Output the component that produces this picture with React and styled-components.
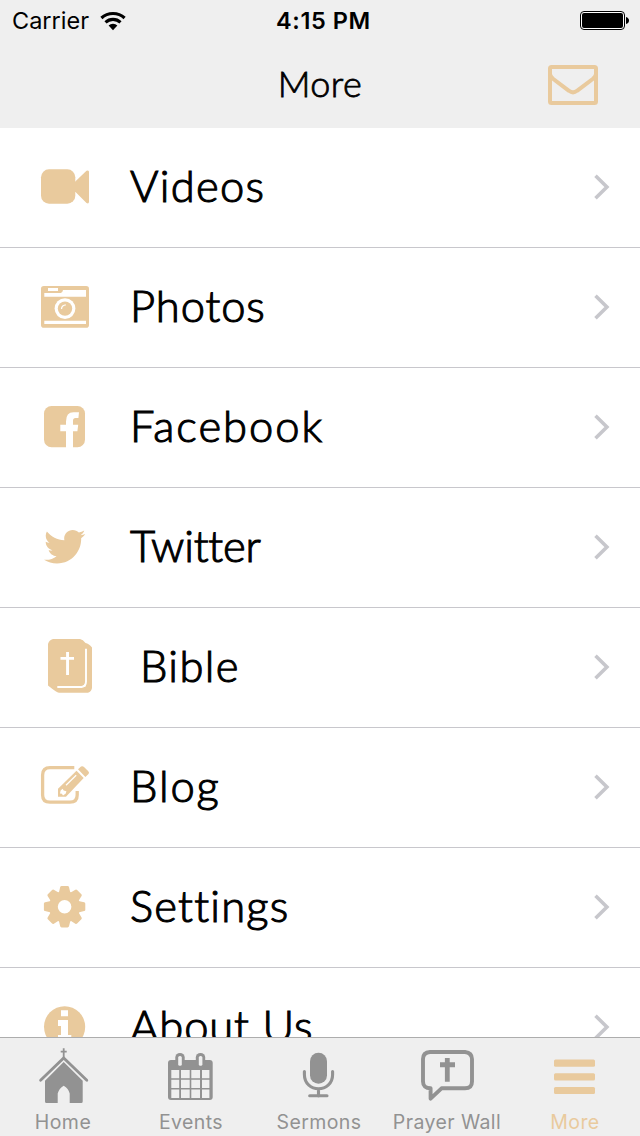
import React from 'react'
import styled, {createGlobalStyle} from 'styled-components'
import {FaTwitter} from 'react-icons/fa'

const tan = '#e9ca9d'
const gray = '#929292'
const bar = '#efefef'

const GlobalStyle = createGlobalStyle`
  * {
    box-sizing: border-box;
  }
  body {
    margin: 0;
    background: white;
    overflow: hidden;
  }
`

const Screen = styled.div`
  display: flex;
  flex-direction: column;
  width: 640px;
  height: 1136px;
  overflow: hidden;
  background: white;
  color: black;
  font-family: Inter, "Liberation Sans", sans-serif;
`

const StatusBar = styled.div`
  display: grid;
  grid-template-columns: 200px 1fr 200px;
  align-items: center;
  flex: none;
  height: 40px;
  padding: 0 11px 0 12px;
  background: ${bar};
`

const Carrier = styled.div`
  display: flex;
  align-items: center;
  gap: 11px;
  font-size: 23.5px;
  line-height: 40px;
`

const Clock = styled.div`
  padding: 1px 0 0 6px;
  text-align: center;
  font-size: 23.5px;
  font-weight: 600;
  line-height: 40px;
  letter-spacing: 0.6px;
`

const Battery = styled.svg`
  justify-self: end;
`

const Header = styled.header`
  display: grid;
  grid-template-columns: 200px 1fr 200px;
  align-items: center;
  flex: none;
  height: 88px;
  padding: 0 42px;
  background: ${bar};
`

const Title = styled.h1`
  grid-column: 2;
  margin: 0;
  padding-bottom: 2px;
  text-align: center;
  font-family: Lato, sans-serif;
  font-size: 36px;
  font-weight: 300;
  line-height: 86px;
  letter-spacing: 0.4px;
  -webkit-text-stroke: 0.8px black;
`

const Mail = styled.svg`
  justify-self: end;
  margin-top: 2px;
`

const List = styled.div`
  flex: 1;
  min-height: 0;
  overflow: hidden;
`

const Row = styled.div`
  display: flex;
  align-items: center;
  height: 120px;
  padding: 0 26px 0 32px;
  border-bottom: 1px solid #c8c7cc;
`

const RowIcon = styled.svg`
  flex: none;
  width: 64px;
  height: 65px;
  fill: ${tan};
  color: ${tan};
`

const Label = styled.span`
  flex: 1;
  margin-left: ${props => props.$left}px;
  padding-bottom: 4px;
  font-family: Lato, sans-serif;
  font-size: 43.5px;
  font-weight: 300;
  line-height: 115px;
  white-space: nowrap;
  letter-spacing: ${props => props.$spacing}px;
  -webkit-text-stroke: 1.1px black;
`

const TabBar = styled.nav`
  display: grid;
  grid-template-columns: repeat(5, 128px);
  flex: none;
  height: 99px;
  border-top: 1px solid #adadad;
  background: ${bar};
`

const Tab = styled.div`
  display: flex;
  flex-direction: column;
  align-items: center;
  padding-top: 6px;
  color: ${props => props.$active ? tan : gray};
`

const TabIcon = styled.svg`
  width: 64px;
  height: 60px;
  fill: currentColor;
`

const TabLabel = styled.span`
  margin-top: 6px;
  padding-right: 2px;
  font-size: 19.5px;
  line-height: 24px;
  white-space: nowrap;
  letter-spacing: ${props => props.$spacing}px;
`

const ChevronSvg = styled.svg`
  margin-bottom: 1px;
`

const Chevron = () => (
  <ChevronSvg width="22" height="30" viewBox="0 0 22 30">
    <path d="M3.5 3.8 L14.9 15 L3.5 26.2" fill="none" stroke="#c7c7cc" strokeWidth="3.6" />
  </ChevronSvg>
)

const Wifi = () => (
  <svg width="26" height="20" viewBox="0 0 26 20">
    <g fill="none" stroke="black" strokeWidth="3.1">
      <path d="M1.4 7 A17 17 0 0 1 24.6 7" />
      <path d="M5.5 11.3 A11 11 0 0 1 20.5 11.3" />
    </g>
    <path d="M13 19.3 L8.6 14.6 A6.3 6.3 0 0 1 17.4 14.6 Z" />
  </svg>
)

const teeth = [0, 45, 90, 135, 180, 225, 270, 315]

const items = [
  {
    name: 'Videos', spacing: 1.3,
    icon: <>
      <rect x="9" y="14.3" width="34.3" height="34.4" rx="8" />
      <path d="M43 26.7 L54.5 15.8 Q57 14.6 57 17 V46.5 Q57 49.3 54.5 48 L43 36.5 Z" />
    </>,
  },
  {
    name: 'Photos', spacing: 0.9,
    icon: <>
      <rect x="9" y="11" width="48" height="41.7" rx="2.8" />
      <g fill="white">
        <path d="M16 13 H26 V16 H16 Z" />
        <path d="M12.3 18 H28.8 Q30.5 18 31 15 H54 V21.7 H12.3 Z" />
        <path d="M12.3 45.7 H54 V49 H12.3 Z" />
        <circle cx="33" cy="33.6" r="10.4" />
      </g>
      <circle cx="33" cy="33.6" r="7.2" />
      <path d="M29.5 34 A4.4 4.4 0 0 1 33.8 29.8" fill="none" stroke="white" strokeWidth="1.3" />
    </>,
  },
  {
    name: 'Facebook', spacing: 2,
    icon: <>
      <rect x="12" y="11" width="41" height="41.2" rx="7.5" />
      <path fill="white" d="M34 53 V36.3 H28.3 V29.7 H34 V26.5 Q34 17.3 41.5 17.3 H47 L46.4 23 H43.5 Q41 23 41 25.8 V29.7 H46.2 L45.4 36.3 H41 V53 Z" />
    </>,
  },
  {
    name: 'Twitter', spacing: -0.2,
    icon: <FaTwitter x="12" y="11" size={41.4} />,
  },
  {
    name: 'Bible', spacing: 1.4, left: 44,
    icon: <>
      <path d="M21 4 H48 Q51 4.5 53.5 8 Q57 8.5 60 12.5 V53 Q59.5 56.5 56 57.7 H27 Q24.5 57.5 16 50.5 V9 Q17 5 21 4 Z" />
      <path d="M25.3 52 H49.5 Q54 51.5 54 46.5 V13.7" fill="none" stroke="white" strokeWidth="1.9" />
      <path d="M49 51.8 H53.5 V47 Q52.5 51 49 51.8 Z" fill="white" />
      <path d="M34.1 17 H37 V22 H42 V24.8 H37 V40 H34.1 V24.8 H28.5 V22 H34.1 Z" fill="white" />
    </>,
  },
  {
    name: 'Blog', spacing: 1.9,
    icon: <>
      <path d="M42.3 12.7 H18 Q10.6 12.7 10.6 20 V40 Q10.6 47.2 18 47.2 H38 Q45.2 47.2 45.2 40 V36" fill="none" stroke={tan} strokeWidth="3.3" />
      <path d="M26 33.8 L44.5 15.8 L51.7 23 L34 41.8 H26 Z" />
      <path d="M46 14.2 L49 11.6 Q50.5 10.5 52 12 L56.3 16.2 Q57.7 17.7 56.5 19 L53.4 22 Z" />
      <path d="M34 30.3 L44.2 20.3" stroke="white" strokeWidth="1.2" />
      <path d="M28.6 35.6 L30.6 33.8 L31.7 35.6 L34.4 36.3 L33.8 38.6 L31 40.6 L29.9 38.8 L28 38.5 Z" fill="white" />
    </>,
  },
  {
    name: 'Settings', spacing: 1.2,
    icon: <g transform="translate(32.6 31.7)">
      <circle r="11.2" fill="none" stroke={tan} strokeWidth="8.8" />
      {teeth.map(angle => (
        <path key={angle} transform={`rotate(${angle})`} d="M-5.8 -13.8 L-4.4 -19.6 Q-4.1 -20.7 -3 -20.7 H3 Q4.1 -20.7 4.4 -19.6 L5.8 -13.8 Z" />
      ))}
    </g>,
  },
  {
    name: 'About Us', spacing: 0.9,
    icon: <>
      <circle cx="32.6" cy="31.8" r="20.6" />
      <path fill="white" d="M29 15.3 H36 V21.3 H29 Z M26 25 H36 V40 H39.3 V46 H26 V40 H29 V31 H26 Z" />
    </>,
  },
]

const tabs = [
  {
    name: 'Home', spacing: 0.5,
    icon: <>
      <path d="M31.7 4.3 V14 M28.7 7.7 H34.7" stroke="currentColor" strokeWidth="1.8" />
      <path d="M8.6 36.3 L31.7 13.9 L54.8 36.3" fill="none" stroke="currentColor" strokeWidth="2.8" strokeLinecap="round" />
      <path d="M13 36.8 L31.7 18 L50.7 36.8 V57.5 Q50.7 59 49.2 59 H37.7 V49.5 Q36.5 44.5 31.7 41.7 Q27 44.5 25.7 49.5 V59 H14.5 Q13 59 13 57.5 Z" />
    </>,
  },
  {
    name: 'Events', spacing: 0.4,
    icon: <>
      <rect x="8" y="16" width="44.7" height="40" rx="3" />
      <rect x="15.3" y="9" width="9.4" height="15" rx="4.6" />
      <rect x="35.8" y="9" width="9.4" height="15" rx="4.6" />
      <g fill={bar}>
        <rect x="18.2" y="12" width="3.6" height="9.8" rx="1.6" />
        <rect x="38.8" y="12" width="3.6" height="9.8" rx="1.6" />
        {[26, 35.8, 45.6].map(y => (
          <path key={y} d={`M11.3 ${y} h7.9 v8.3 h-7.9 Z M21 ${y} h8.7 v8.3 h-8.7 Z M31.3 ${y} h8.7 v8.3 h-8.7 Z M42 ${y} h7.4 v8.3 h-7.4 Z`} />
        ))}
      </g>
    </>,
  },
  {
    name: 'Sermons', spacing: 0.4,
    icon: <>
      <rect x="22" y="8.8" width="17" height="31" rx="8.5" />
      <path d="M16.4 27.5 V30.5 C16.4 49.5 44.6 49.5 44.6 30.5 V27.5 M30.5 45 V52 M21.7 51.7 H39" fill="none" stroke="currentColor" strokeWidth="3.1" strokeLinecap="round" />
    </>,
  },
  {
    name: 'Prayer Wall', spacing: 0.4,
    icon: <>
      <path d="M14 8 H49 Q56 9 56 15 V37.5 Q56 44.3 49 44.3 H25.5 L14.6 54.6 V44.3 Q7 44.3 7 37.5 V15 Q7 8.5 14 8 Z" fill="none" stroke="currentColor" strokeWidth="3.9" strokeLinejoin="round" />
      <path d="M28.9 14 H33.7 V18.3 H39 V23.2 H33.7 V37.8 H28.9 V23.2 H24 V18.3 H28.9 Z" />
    </>,
  },
  {
    name: 'More', spacing: 0.4, active: true,
    icon: <>
      <rect x="10" y="15.6" width="41" height="7.1" rx="1.5" />
      <rect x="10" y="29.3" width="41" height="7.1" rx="1.5" />
      <rect x="10" y="43" width="41" height="7.1" rx="1.5" />
    </>,
  },
]

export default function App() {
  return (
    <Screen>
      <GlobalStyle />
      <StatusBar>
        <Carrier>Carrier <Wifi /></Carrier>
        <Clock>4:15 PM</Clock>
        <Battery width="49" height="19" viewBox="0 0 49 19">
          <rect x="0.5" y="0.5" width="44" height="18" rx="3.5" fill="white" stroke="black" />
          <rect x="2" y="2" width="41" height="15" rx="2" />
          <path d="M46 6 Q49 7 49 9.5 Q49 12 46 13 Z" />
        </Battery>
      </StatusBar>
      <Header>
        <Title>More</Title>
        <Mail width="50" height="40" viewBox="0 0 50 40" fill="none" stroke={tan} strokeWidth="4">
          <rect x="2" y="2" width="46" height="36" rx="1.5" />
          <path d="M2 9.5 Q3 12 5 13.8 L21 25.8 Q25 29 29 25.8 L45 13.8 Q47 12 48 9.5" />
        </Mail>
      </Header>
      <List>
        {items.map(item => (
          <Row key={item.name}>
            <RowIcon viewBox="0 0 64 65">{item.icon}</RowIcon>
            <Label $left={item.left || 34} $spacing={item.spacing}>{item.name}</Label>
            <Chevron />
          </Row>
        ))}
      </List>
      <TabBar>
        {tabs.map(tab => (
          <Tab key={tab.name} $active={tab.active}>
            <TabIcon viewBox="0 0 64 60">{tab.icon}</TabIcon>
            <TabLabel $spacing={tab.spacing}>{tab.name}</TabLabel>
          </Tab>
        ))}
      </TabBar>
    </Screen>
  )
}
